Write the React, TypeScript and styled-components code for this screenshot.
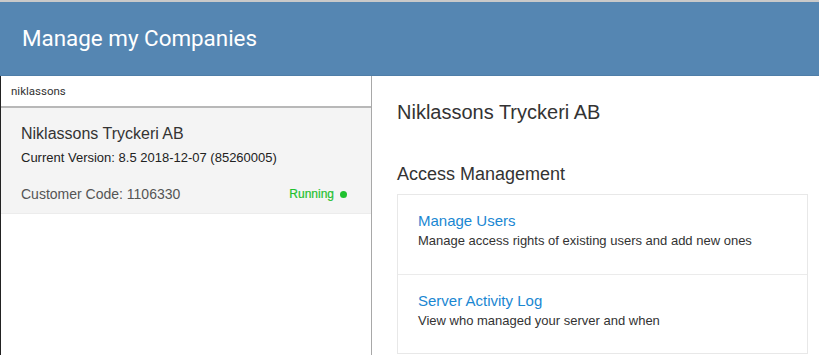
import styled, { createGlobalStyle } from "styled-components";

const GlobalStyle = createGlobalStyle`
  html, body {
    margin: 0;
    padding: 0;
    background: #fff;
  }
  body {
    font-family: "Liberation Sans", Arial, sans-serif;
    color: #333;
  }
`;

const Page = styled.div`
  width: 819px;
  height: 355px;
  display: flex;
  flex-direction: column;
  overflow: hidden;
  border-top: 2px solid #c9c9c9;
  box-sizing: border-box;
`;

const Header = styled.header`
  height: 73px;
  flex: none;
  background: #5586b2;
  display: flex;
  align-items: center;
  padding-left: 22px;
  border-bottom: 1px solid #4f7ea8;
`;

const Title = styled.h1`
  margin: 0 0 1px;
  font-family: Roboto, "Liberation Sans", sans-serif;
  font-weight: 400;
  font-size: 22.4px;
  color: #fff;
`;

const Body = styled.div`
  flex: 1;
  display: flex;
  min-height: 0;
`;

const Sidebar = styled.aside`
  width: 370px;
  flex: none;
  border-left: 1px solid #222;
  border-right: 1px solid #a8a8a8;
  display: flex;
  flex-direction: column;
`;

const Search = styled.div`
  height: 30px;
  flex: none;
  display: flex;
  align-items: center;
  padding-left: 10px;
  border-bottom: 2px solid #b8b8b8;
  font-family: Roboto, "Liberation Sans", sans-serif;
  font-size: 11.5px;
  color: #333;
`;

const CompanyItem = styled.div`
  background: #f4f4f4;
  padding: 17px 24px 0 20px;
  height: 106px;
  box-sizing: border-box;
  border-bottom: 1px solid #ececec;
`;

const CompanyName = styled.div`
  font-size: 16px;
  color: #333;
`;

const Version = styled.div`
  margin-top: 7px;
  font-size: 13px;
  color: #222;
`;

const ItemFooter = styled.div`
  margin-top: 21px;
  display: flex;
  justify-content: space-between;
  align-items: center;
`;

const CustomerCode = styled.span`
  font-size: 14px;
  color: #555;
`;

const Status = styled.span<{ $color: string }>`
  display: flex;
  align-items: center;
  gap: 6px;
  font-size: 12px;
  color: ${(p) => p.$color};
  -webkit-text-stroke: 0.2px ${(p) => p.$color};

  &::after {
    content: "";
    width: 7px;
    height: 7px;
    border-radius: 50%;
    background: ${(p) => p.$color};
  }
`;

const Main = styled.main`
  flex: 1;
  padding: 25px 11px 0 25px;
`;

const CompanyTitle = styled.h2`
  margin: 0;
  font-size: 20px;
  font-weight: 400;
  color: #333;
`;

const SectionTitle = styled.h3`
  margin: 40px 0 9px;
  font-size: 18px;
  font-weight: 400;
  color: #333;
`;

const Card = styled.div`
  border: 1px solid #e8e8e8;
  display: flex;
  flex-direction: column;
`;

const CardRow = styled.div`
  height: 79px;
  box-sizing: border-box;
  padding: 17px 20px 0;
  & + & {
    border-top: 1px solid #ebebeb;
  }
`;

const RowLink = styled.a`
  display: block;
  font-size: 15px;
  color: #1a87d2;
  text-decoration: none;
`;

const RowText = styled.div`
  margin-top: 4px;
  font-size: 13px;
  color: #333;
`;

const actions = [
  {
    title: "Manage Users",
    text: "Manage access rights of existing users and add new ones",
  },
  {
    title: "Server Activity Log",
    text: "View who managed your server and when",
  },
];

export default function App() {
  return (
    <>
      <GlobalStyle />
      <Page>
        <Header>
          <Title>Manage my Companies</Title>
        </Header>
        <Body>
          <Sidebar>
            <Search>niklassons</Search>
            <CompanyItem>
              <CompanyName>Niklassons Tryckeri AB</CompanyName>
              <Version>Current Version: 8.5 2018-12-07 (85260005)</Version>
              <ItemFooter>
                <CustomerCode>Customer Code: 1106330</CustomerCode>
                <Status $color="#1fc12f">Running</Status>
              </ItemFooter>
            </CompanyItem>
          </Sidebar>
          <Main>
            <CompanyTitle>Niklassons Tryckeri AB</CompanyTitle>
            <SectionTitle>Access Management</SectionTitle>
            <Card>
              {actions.map((a) => (
                <CardRow key={a.title}>
                  <RowLink href="#">{a.title}</RowLink>
                  <RowText>{a.text}</RowText>
                </CardRow>
              ))}
            </Card>
          </Main>
        </Body>
      </Page>
    </>
  );
}
